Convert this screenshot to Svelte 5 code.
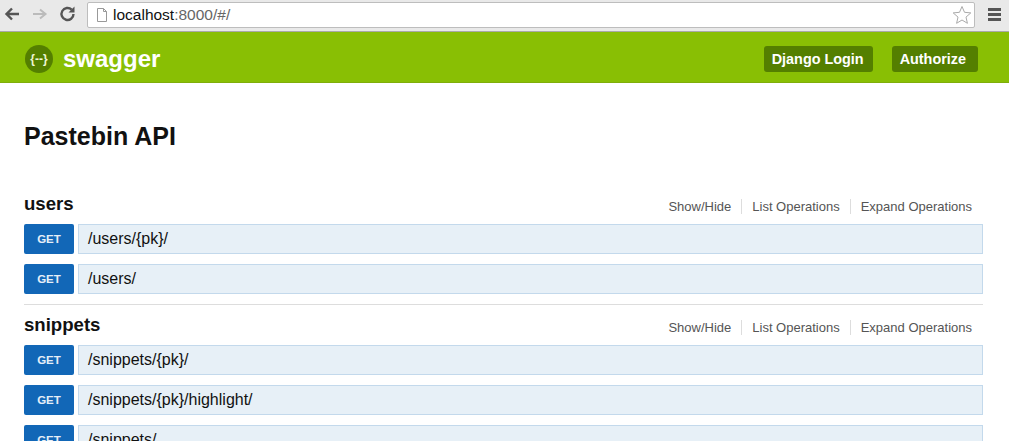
<script>
  const sections = [
    { name: "users", ops: ["/users/{pk}/", "/users/"] },
    { name: "snippets", ops: ["/snippets/{pk}/", "/snippets/{pk}/highlight/", "/snippets/"] }
  ];
</script>

<div class="page">
  <div class="browser">
    <div class="nav">
      <svg width="78" height="20" viewBox="0 0 78 20">
        <path d="M19 10H7M12 4.500 6.500 10l5.500 5.500" fill="none" stroke="#555" stroke-width="2.400"/>
        <path d="M33 10H45M40 5.500 45.500 10 40 14.500" fill="none" stroke="#bbb" stroke-width="2"/>
        <path d="M73.500 10a6 6 0 1 1-1.800-4.300" fill="none" stroke="#555" stroke-width="2.400"/>
        <path d="M74.500 2.500v6h-6z" fill="#555"/>
      </svg>
    </div>
    <div class="urlbox">
      <svg width="14" height="16" viewBox="0 0 14 16">
        <path d="M2.500 1.500h6l3 3v10h-9zM8.500 1.500v3h3" fill="#fff" stroke="#999"/>
      </svg>
      <span class="url"><b>localhost</b>:8000/#/</span>
      <svg class="star" width="20" height="20" viewBox="0 0 20 20">
        <path d="M10 1.500l2.500 5.800 6.300.6-4.800 4.200 1.400 6.200L10 15l-5.400 3.300L6 12.100 1.200 7.900l6.300-.6z" fill="#fff" stroke="#aaa"/>
      </svg>
    </div>
    <div class="menu"><i></i><i></i><i></i></div>
  </div>

  <header class="topbar">
    <div class="brand">
      <span class="logo">{"{--}"}</span>
      <span class="wordmark">swagger</span>
    </div>
    <div class="actions">
      <a href="#login" class="btn">Django Login</a>
      <a href="#auth" class="btn">Authorize</a>
    </div>
  </header>

  <main>
    <h1>Pastebin API</h1>
    {#each sections as section}
      <section>
        <div class="heading">
          <h2>{section.name}</h2>
          <ul class="links">
            <li>Show/Hide</li>
            <li>List Operations</li>
            <li>Expand Operations</li>
          </ul>
        </div>
        {#each section.ops as path}
          <div class="op">
            <span class="method">GET</span>
            <span class="path">{path}</span>
          </div>
        {/each}
      </section>
    {/each}
  </main>
</div>

<style>
  :global(body) {
    margin: 0;
    background: #fff;
    overflow: hidden;
  }

  .page {
    height: 441px;
    overflow: hidden;
    font-family: "Liberation Sans", Arial, sans-serif;
    color: #111;
  }

  .browser {
    display: flex;
    align-items: center;
    height: 32px;
    box-sizing: border-box;
    background: #e9e9e9;
    border-bottom: 1px solid #a9a9a9;
  }

  .nav {
    display: flex;
    width: 87px;
    height: 20px;
    margin-top: -3px;
  }

  .urlbox {
    display: flex;
    align-items: center;
    width: 888px;
    height: 26px;
    margin-top: -2px;
    box-sizing: border-box;
    padding: 0 2px 0 7px;
    background: #fff;
    border: 1px solid #bdbdbd;
    border-radius: 2px;
  }

  .url {
    margin-left: 4px;
    font-size: 15.500px;
    color: #666;
  }

  .url b {
    font-weight: normal;
    color: #111;
  }

  .star {
    margin-left: auto;
  }

  .menu {
    display: flex;
    flex-direction: column;
    gap: 2px;
    margin: -2px 0 0 13px;
  }

  .menu i {
    display: block;
    width: 13px;
    height: 3px;
    background: #555;
  }

  .topbar {
    display: flex;
    align-items: center;
    justify-content: space-between;
    height: 51px;
    box-sizing: border-box;
    padding: 4px 31px 0 25px;
    background: #89bf04;
    border-bottom: 1px solid #7fae0a;
  }

  .brand {
    display: flex;
    align-items: center;
    gap: 10px;
  }

  .logo {
    display: flex;
    align-items: center;
    justify-content: center;
    width: 28px;
    height: 28px;
    border-radius: 50%;
    background: #547f00;
    color: #eef6d5;
    font-size: 12px;
    font-weight: bold;
  }

  .wordmark {
    color: #fff;
    font-size: 24px;
    font-weight: bold;
  }

  .actions {
    display: flex;
    gap: 19px;
  }

  .btn {
    padding: 0 9px 0 8px;
    height: 26px;
    line-height: 26px;
    border-radius: 3px;
    background: #547f00;
    color: #fff;
    font-size: 14.400px;
    font-weight: bold;
    text-decoration: none;
  }

  .btn:first-child {
    min-width: 91px;
  }

  .btn:last-child {
    padding-right: 12px;
  }

  main {
    padding: 0 26px 0 24px;
  }

  h1 {
    margin: 0;
    padding-top: 38px;
    font-size: 25px;
    line-height: 30px;
  }

  section + section {
    margin-top: 10px;
    border-top: 1px solid #ddd;
  }

  section:first-of-type {
    margin-top: 33px;
  }

  .heading {
    display: flex;
    align-items: center;
    justify-content: space-between;
    height: 40px;
  }

  h2 {
    margin: 0 0 1px;
    font-size: 18.600px;
  }

  .links {
    display: flex;
    list-style: none;
    margin: 4px 0 0;
    padding: 0 11px 0 0;
    font-size: 13px;
    color: #555;
  }

  .links li + li {
    margin-left: 10px;
    padding-left: 10px;
    border-left: 1px solid #ddd;
  }

  .op {
    display: flex;
    height: 30px;
    margin-bottom: 10px;
  }

  .op:last-child {
    margin-bottom: 0;
  }

  .method {
    width: 50px;
    line-height: 31px;
    text-align: center;
    background: #1267b7;
    border-radius: 2px;
    color: #e6eff8;
    font-size: 11.500px;
    font-weight: bold;
  }

  .path {
    flex: 1;
    margin-left: 4px;
    padding-left: 9px;
    box-sizing: border-box;
    line-height: 28px;
    background: #e7f0f7;
    border: 1px solid #c3d9ec;
    font-size: 16px;
    color: #111;
  }
</style>
